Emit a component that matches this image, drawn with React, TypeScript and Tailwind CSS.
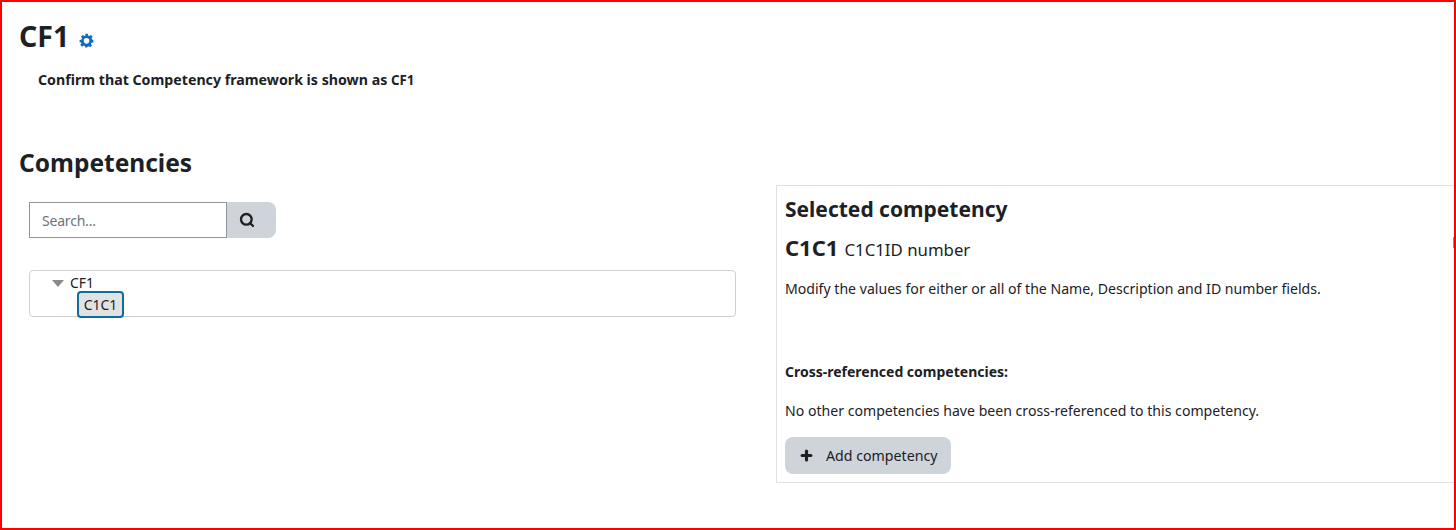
import { Plus, Search } from 'lucide-react';

function GearIcon() {
    return (
        <svg viewBox="0 0 24 24" className="w-[15px] h-[15px] text-[#0f6cbf]" fill="currentColor">
            <path fillRule="evenodd" d="M10 1h4l.6 3.1 1.9.8 2.6-1.8 2.8 2.8-1.8 2.6.8 1.9L23 11v4l-3.1.6-.8 1.9 1.8 2.6-2.8 2.8-2.6-1.8-1.9.8L13 23h-3l-.6-2.1-1.9-.8-2.6 1.8-2.8-2.8 1.8-2.6-.8-1.9L1 15v-4l3.1-.6.8-1.9-1.8-2.6 2.8-2.8 2.6 1.8 1.9-.8zM12 8a4.5 4.5 0 1 0 0 9 4.5 4.5 0 0 0 0-9z" />
        </svg>
    );
}

export default function App() {
    return (
        <div className="relative h-[530px] w-[1456px] overflow-hidden border-2 border-[#ff0000] bg-white text-[#1d2125] font-['Noto_Sans',sans-serif]">
            {/* Page header */}
            <div className="pl-[17px] pt-[15px]">
                <div className="flex items-center gap-[10px] h-[38px]">
                    <h1 className="text-[28.5px] font-bold leading-[38px]">CF1</h1>
                    <span className="mt-[9px]"><GearIcon /></span>
                </div>
                <p className="ml-[19px] mt-[15px] text-[14.2px] leading-[20px] font-bold">
                    Confirm that Competency framework is shown as <span className="text-[13.3px]">CF1</span>
                </p>
                <h2 className="mt-[57px] text-[24.5px] font-bold leading-[32px]">Competencies</h2>
            </div>

            <div className="flex items-start">
                {/* Left column: search and tree */}
                <div className="w-[774px] pl-[27px] pt-[23px] shrink-0">
                    <div className="flex h-[36px] w-[247px]">
                        <div className="flex-1 border border-[#8f959e] pl-[12px] text-[14px] tracking-[-0.2px] leading-[35px] text-[#6a737b]">Search...</div>
                        <button className="flex w-[49px] items-center rounded-r-lg bg-[#ced4da] pl-[12px]">
                            <Search className="w-[16px] h-[16px]" strokeWidth={3.5} />
                        </button>
                    </div>
                    <div className="mt-[32px] h-[47px] w-[707px] rounded border border-[#cfcfcf] pl-[22px] text-[14px]">
                        <div className="flex items-center h-[21px] pt-[3px] leading-[18px]">
                            <span className="h-0 w-0 border-x-[6px] border-t-[7px] border-x-transparent border-t-[#8a8a8a]" />
                            <span className="ml-[6px]">CF1</span>
                        </div>
                        <div className="ml-[25px] -mt-[1px] flex h-[27px] w-[47px] items-center justify-center rounded border-2 border-[#0f6c9f] bg-[#e2e2e2] text-[14px]">C1C1</div>
                    </div>
                </div>

                {/* Right column: selected competency */}
                <div className="flex-1 mt-[6px] h-[298px] border border-r-0 border-[#dee2e6] pl-[8px] pt-[9px]">
                    <h3 className="text-[21px] font-bold leading-[28px]">Selected competency</h3>
                    <div className="mt-[10px] flex items-baseline gap-[6px] leading-[28px]">
                        <span className="text-[22px] font-bold">C1C1</span>
                        <span className="text-[16.8px]">C1C1ID number</span>
                    </div>
                    <p className="mt-[15px] text-[14.1px] leading-[20px]">Modify the values for either or all of the Name, Description and ID number fields.</p>
                    <p className="mt-[63px] text-[14px] font-bold leading-[20px]">Cross-referenced competencies:</p>
                    <p className="mt-[19px] text-[14.1px] leading-[20px]">No other competencies have been cross-referenced to this competency.</p>
                    <button className="mt-[16px] flex h-[37px] w-[166px] items-center rounded-lg bg-[#ced4da] pl-[14px] text-[14.2px]">
                        <Plus className="w-[15px] h-[15px]" strokeWidth={5} />
                        <span className="ml-[12px]">Add competency</span>
                    </button>
                </div>
            </div>

            {/* Scroll tick at the right edge */}
            <div className="absolute right-0 top-[235px] h-[11px] w-[1px] bg-[#9a86a8]" />
        </div>
    );
}
